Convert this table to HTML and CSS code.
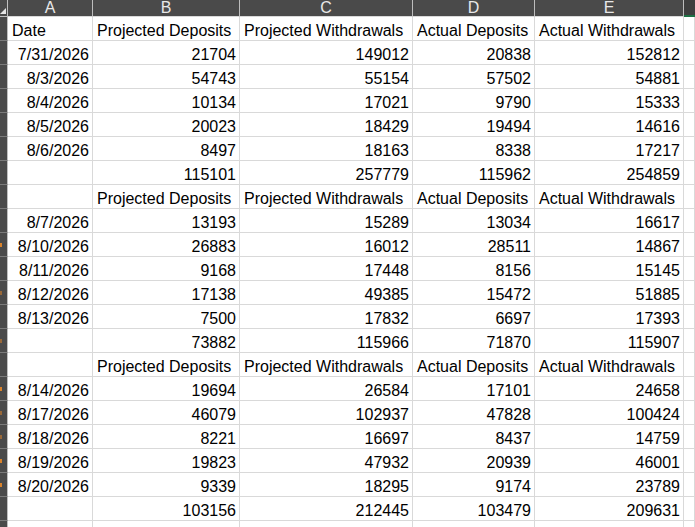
FILE: index.html
```html
<!DOCTYPE html>
<html lang="en">
<head>
<meta charset="utf-8">
<title>Deposits and Withdrawals</title>
<link rel="stylesheet" href="styles.css">
</head>
<body>
<div class="sheet">
  <div class="corner"><svg class="corner-tri" width="6" height="6" viewBox="0 0 6 6"><polygon points="6,0 6,6 0,6" fill="#e6e6e6"/></svg></div>
  <div class="ch">A</div><div class="ch">B</div><div class="ch">C</div><div class="ch">D</div><div class="ch">E</div><div class="ch ch-f"></div>

  <div class="rh"></div><div class="c t">Date</div><div class="c t">Projected Deposits</div><div class="c t">Projected Withdrawals</div><div class="c t">Actual Deposits</div><div class="c t">Actual Withdrawals</div><div class="c"></div>
  <div class="rh"></div><div class="c n">7/31/2026</div><div class="c n">21704</div><div class="c n">149012</div><div class="c n">20838</div><div class="c n">152812</div><div class="c"></div>
  <div class="rh"></div><div class="c n">8/3/2026</div><div class="c n">54743</div><div class="c n">55154</div><div class="c n">57502</div><div class="c n">54881</div><div class="c"></div>
  <div class="rh"></div><div class="c n">8/4/2026</div><div class="c n">10134</div><div class="c n">17021</div><div class="c n">9790</div><div class="c n">15333</div><div class="c"></div>
  <div class="rh"></div><div class="c n">8/5/2026</div><div class="c n">20023</div><div class="c n">18429</div><div class="c n">19494</div><div class="c n">14616</div><div class="c"></div>
  <div class="rh"></div><div class="c n">8/6/2026</div><div class="c n">8497</div><div class="c n">18163</div><div class="c n">8338</div><div class="c n">17217</div><div class="c"></div>
  <div class="rh"></div><div class="c"></div><div class="c n">115101</div><div class="c n">257779</div><div class="c n">115962</div><div class="c n">254859</div><div class="c"></div>
  <div class="rh"></div><div class="c"></div><div class="c t">Projected Deposits</div><div class="c t">Projected Withdrawals</div><div class="c t">Actual Deposits</div><div class="c t">Actual Withdrawals</div><div class="c"></div>
  <div class="rh"></div><div class="c n">8/7/2026</div><div class="c n">13193</div><div class="c n">15289</div><div class="c n">13034</div><div class="c n">16617</div><div class="c"></div>
  <div class="rh"><span class="mark"></span></div><div class="c n">8/10/2026</div><div class="c n">26883</div><div class="c n">16012</div><div class="c n">28511</div><div class="c n">14867</div><div class="c"></div>
  <div class="rh"></div><div class="c n">8/11/2026</div><div class="c n">9168</div><div class="c n">17448</div><div class="c n">8156</div><div class="c n">15145</div><div class="c"></div>
  <div class="rh"><span class="mark faint"></span></div><div class="c n">8/12/2026</div><div class="c n">17138</div><div class="c n">49385</div><div class="c n">15472</div><div class="c n">51885</div><div class="c"></div>
  <div class="rh"></div><div class="c n">8/13/2026</div><div class="c n">7500</div><div class="c n">17832</div><div class="c n">6697</div><div class="c n">17393</div><div class="c"></div>
  <div class="rh"><span class="mark faint"></span></div><div class="c"></div><div class="c n">73882</div><div class="c n">115966</div><div class="c n">71870</div><div class="c n">115907</div><div class="c"></div>
  <div class="rh"></div><div class="c"></div><div class="c t">Projected Deposits</div><div class="c t">Projected Withdrawals</div><div class="c t">Actual Deposits</div><div class="c t">Actual Withdrawals</div><div class="c"></div>
  <div class="rh"><span class="mark"></span></div><div class="c n">8/14/2026</div><div class="c n">19694</div><div class="c n">26584</div><div class="c n">17101</div><div class="c n">24658</div><div class="c"></div>
  <div class="rh"><span class="mark faint"></span></div><div class="c n">8/17/2026</div><div class="c n">46079</div><div class="c n">102937</div><div class="c n">47828</div><div class="c n">100424</div><div class="c"></div>
  <div class="rh"><span class="mark faint"></span></div><div class="c n">8/18/2026</div><div class="c n">8221</div><div class="c n">16697</div><div class="c n">8437</div><div class="c n">14759</div><div class="c"></div>
  <div class="rh"><span class="mark"></span></div><div class="c n">8/19/2026</div><div class="c n">19823</div><div class="c n">47932</div><div class="c n">20939</div><div class="c n">46001</div><div class="c"></div>
  <div class="rh"><span class="mark"></span></div><div class="c n">8/20/2026</div><div class="c n">9339</div><div class="c n">18295</div><div class="c n">9174</div><div class="c n">23789</div><div class="c"></div>
  <div class="rh"></div><div class="c"></div><div class="c n">103156</div><div class="c n">212445</div><div class="c n">103479</div><div class="c n">209631</div><div class="c"></div>
  <div class="rh"></div><div class="c"></div><div class="c"></div><div class="c"></div><div class="c"></div><div class="c"></div><div class="c"></div>
</div>
</body>
</html>
```

FILE: styles.css
```css
html, body {
  margin: 0;
  padding: 0;
  background: #ffffff;
  overflow: hidden;
}

.sheet {
  display: grid;
  grid-template-columns: 8px 85px 147px 173px 122px 149px 1fr;
  grid-template-rows: 17px repeat(22, 24px);
  width: 695px;
  font-family: "Liberation Sans", Arial, sans-serif;
  font-size: 16px;
  color: #000000;
}

.corner {
  background: #4a4a4a;
  border-bottom: 1px solid #bfbfbf;
  border-right: 1px solid #bfbfbf;
  box-sizing: border-box;
  display: flex;
  align-items: flex-end;
  padding-bottom: 2px;
}

.corner-tri {
  display: block;
}

.ch {
  background: #4a4a4a;
  color: #e8e8e8;
  font-size: 16px;
  line-height: 16px;
  text-align: center;
  box-sizing: border-box;
  border-right: 1px solid #bdbdbd;
  border-bottom: 1px solid #d9d9d9;
  overflow: hidden;
}

.ch-f {
  background: #3f3f3f;
  border-right: none;
  border-bottom: 2px solid #1e7145;
}

.rh {
  background: #4a4a4a;
  box-sizing: border-box;
  border-bottom: 1px solid #7a7a7a;
  border-right: 1px solid #bfbfbf;
  display: flex;
  align-items: center;
}

.mark {
  display: block;
  width: 2px;
  height: 4px;
  background: #d9822b;
}

.mark.faint {
  opacity: 0.55;
}

.c {
  box-sizing: border-box;
  border-right: 1px solid #d9d9d9;
  border-bottom: 1px solid #d9d9d9;
  display: flex;
  align-items: flex-end;
  padding: 0 3px 0 4px;
  line-height: 18px;
  white-space: nowrap;
  overflow: hidden;
}

.n {
  justify-content: flex-end;
}

.t {
  justify-content: flex-start;
}
```
